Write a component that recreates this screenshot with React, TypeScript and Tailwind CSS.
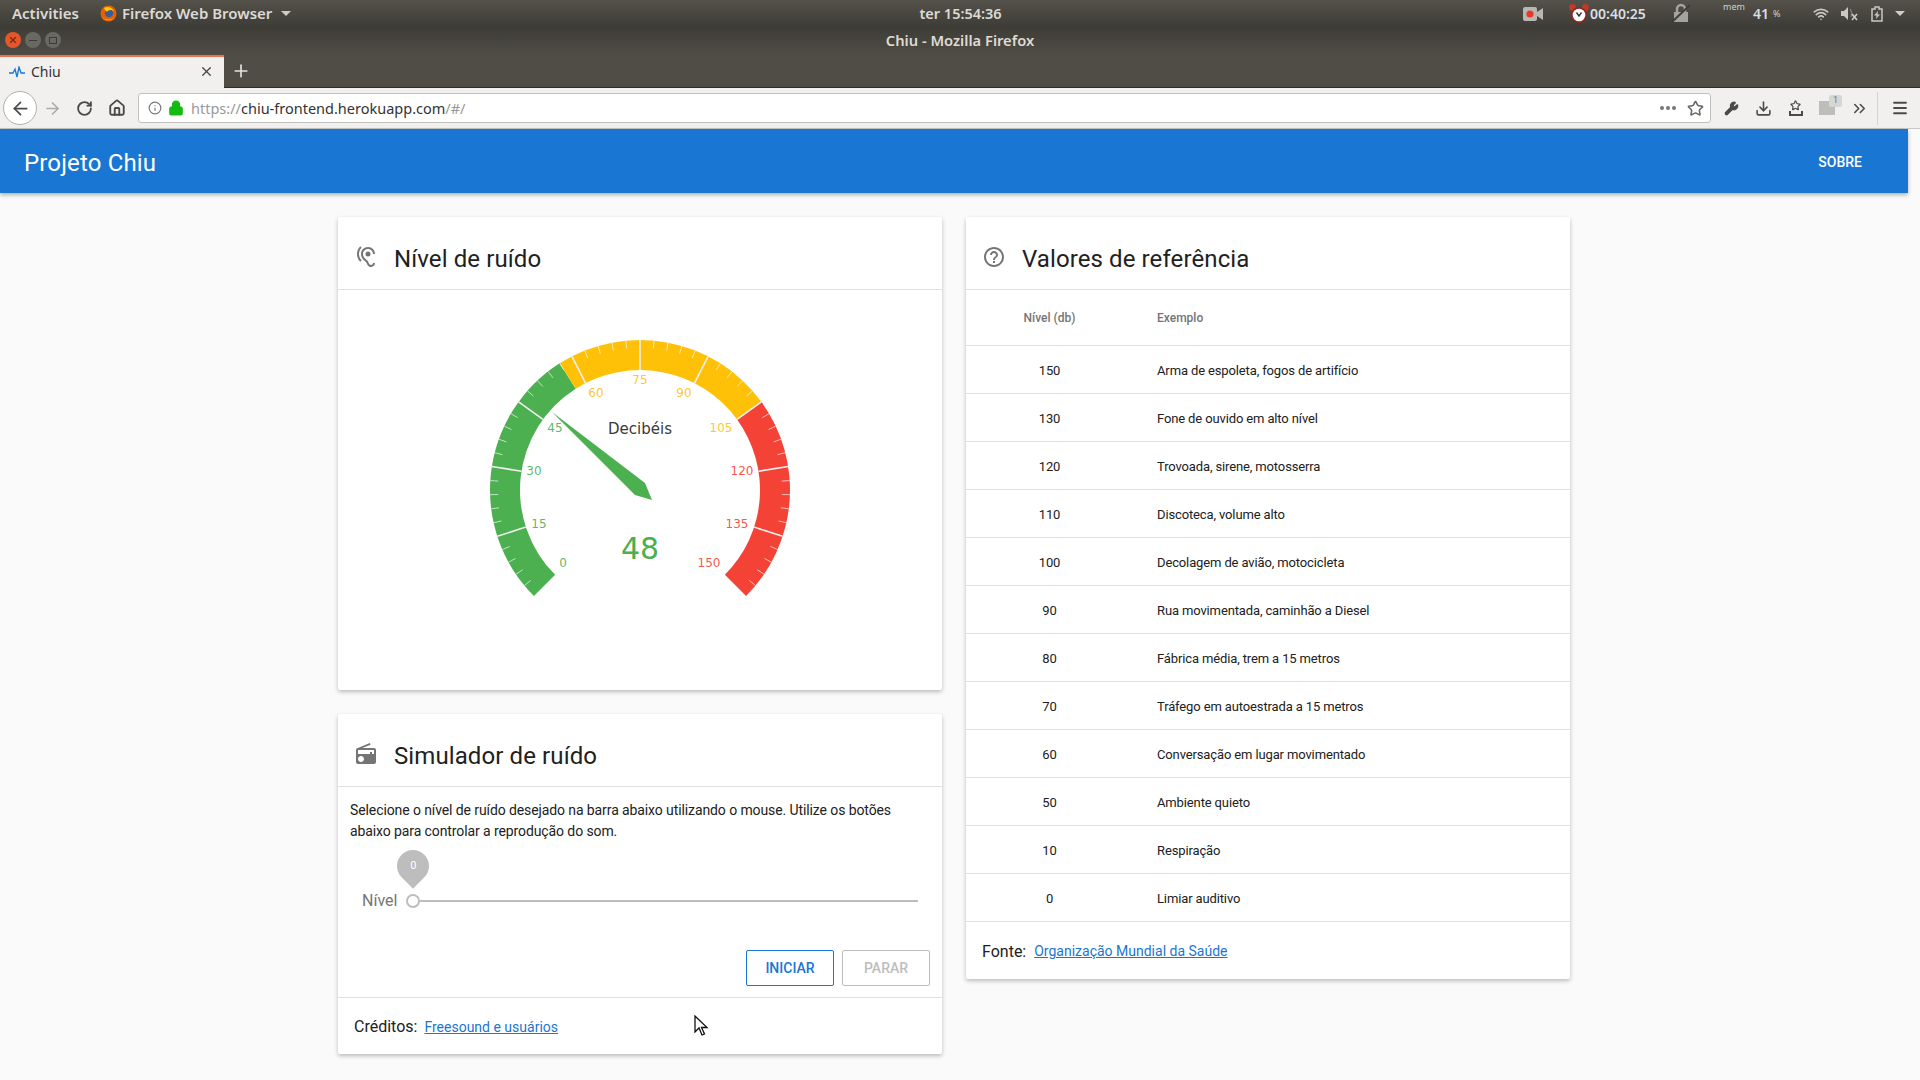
import React from "react";
import { ArrowLeft, ArrowRight, RotateCw, Home, Info, Lock, Star, Wrench, Download, ChevronsRight, Menu, Plus, X, Wifi } from "lucide-react";
import { MdHearing, MdRadio, MdHelpOutline } from "react-icons/md";

const rows: [string, string][] = [
  ["150", "Arma de espoleta, fogos de artifício"],
  ["130", "Fone de ouvido em alto nível"],
  ["120", "Trovoada, sirene, motosserra"],
  ["110", "Discoteca, volume alto"],
  ["100", "Decolagem de avião, motocicleta"],
  ["90", "Rua movimentada, caminhão a Diesel"],
  ["80", "Fábrica média, trem a 15 metros"],
  ["70", "Tráfego em autoestrada a 15 metros"],
  ["60", "Conversação em lugar movimentado"],
  ["50", "Ambiente quieto"],
  ["10", "Respiração"],
  ["0", "Limiar auditivo"],
];

const GREEN = "#4caf50";
const YELLOW = "#ffc107";
const RED = "#f44336";
const CX = 180;
const CY = 170;

const labels: [number, number, number, string][] = [
  [0, -77, 73, GREEN],
  [15, -101, 34, GREEN],
  [30, -106, -19, GREEN],
  [45, -85, -62, GREEN],
  [60, -44, -97, YELLOW],
  [75, 0, -110, YELLOW],
  [90, 44, -97, YELLOW],
  [105, 81, -62, YELLOW],
  [120, 102, -19, RED],
  [135, 97, 34, RED],
  [150, 69, 73, RED],
];

function polar(r: number, value: number) {
  const a = ((-135 + value * 1.8) * Math.PI) / 180;
  return [CX + r * Math.sin(a), CY - r * Math.cos(a)];
}

function arc(from: number, to: number) {
  const [x1, y1] = polar(150, from);
  const [x2, y2] = polar(150, to);
  const [x3, y3] = polar(120, to);
  const [x4, y4] = polar(120, from);
  const large = (to - from) * 1.8 > 180 ? 1 : 0;
  return `M${x1} ${y1}A150 150 0 ${large} 1 ${x2} ${y2}L${x3} ${y3}A120 120 0 ${large} 0 ${x4} ${y4}Z`;
}

function Gauge() {
  const majors = [15, 30, 45, 60, 75, 90, 105, 120, 135];
  const minors: number[] = [];
  for (let v = 0; v < 150; v += 3) if (v % 15 !== 0) minors.push(v);
  return (
    <svg width="360" height="290" viewBox="0 0 360 290" className="block" style={{ fontFamily: "'DejaVu Sans', sans-serif" }}>
      <path d={arc(0, 57)} fill={GREEN} />
      <path d={arc(57, 105)} fill={YELLOW} />
      <path d={arc(105, 150)} fill={RED} />
      {minors.map((v) => {
        const [x1, y1] = polar(150, v);
        const [x2, y2] = polar(142, v);
        return <line key={v} x1={x1} y1={y1} x2={x2} y2={y2} stroke="#ffffff" strokeOpacity="0.65" strokeWidth="1" />;
      })}
      {majors.map((v) => {
        const [x1, y1] = polar(150, v);
        const [x2, y2] = polar(120, v);
        return <line key={v} x1={x1} y1={y1} x2={x2} y2={y2} stroke="#f0f0f0" strokeWidth="1.6" />;
      })}
      {labels.map(([v, dx, dy, c]) => (
        <text key={v} x={CX + dx} y={CY + dy + 4} textAnchor="middle" fontSize="12" fill={c} fillOpacity="0.9">
          {v}
        </text>
      ))}
      <text x="180" y="114" textAnchor="middle" fontSize="15" fill="#3a3a3a">Decibéis</text>
      <text x="180" y="239" textAnchor="middle" fontSize="30" fill={GREEN}>48</text>
      <polygon points="92,92 185,163 192,180 175,175" fill={GREEN} />
    </svg>
  );
}

function CardHeader({ icon, title }: { icon: React.ReactNode; title: string }) {
  return (
    <div className="flex h-[73px] items-center border-b border-[#e0e0e0] pl-4 pt-[12px]">
      <div className="-mt-[4px] w-[24px] text-[24px] text-[#757575]">{icon}</div>
      <div className="ml-[16px] text-[24px] leading-none tracking-[0.1px] text-[#212121]">{title}</div>
    </div>
  );
}

function Firefox() {
  return (
    <svg width="17" height="17" viewBox="0 0 17 17">
      <circle cx="8.5" cy="8.5" r="8" fill="#e66000" />
      <path d="M2 12A8 8 0 0 0 15 12C13 15 5 15 2 12Z" fill="#ff9500" />
      <circle cx="9" cy="8" r="4.2" fill="#3c5a9a" />
      <path d="M4 3C7 1 13 2 14 7C12 4 8 5 7 7C6 6 5 5 4 3Z" fill="#ffcb00" />
    </svg>
  );
}

function Alarm() {
  return (
    <svg width="22" height="22" viewBox="0 0 22 22">
      <circle cx="4.5" cy="4.5" r="3.4" fill="#c0392b" />
      <circle cx="17.5" cy="4.5" r="3.4" fill="#c0392b" />
      <circle cx="11" cy="12" r="8" fill="#8e2a1e" />
      <circle cx="11" cy="12" r="6.3" fill="#ffffff" />
      <path d="M8.5 9.5L11 13L13.5 9.5" fill="none" stroke="#333" strokeWidth="1.4" />
    </svg>
  );
}

function TopBar() {
  return (
    <div className="flex h-[27px] items-center bg-gradient-to-b from-[#54524a] to-[#3d3c36] font-semibold text-[#dcdad5]" style={{ fontFamily: "'Noto Sans', sans-serif" }}>
      <div className="flex flex-1 items-center text-[15px]">
        <span className="ml-[12px] w-[88px]">Activities</span>
        <Firefox />
        <span className="ml-[5px] whitespace-nowrap">Firefox Web Browser</span>
        <span className="ml-[9px] h-0 w-0 border-x-[5px] border-t-[5px] border-x-transparent border-t-[#cfcdc8]" />
      </div>
      <span className="pl-[16px] text-center text-[14.5px]">ter 15:54:36</span>
      <div className="flex flex-1 items-center justify-end pr-[15px]">
        <svg width="20" height="14" viewBox="0 0 20 14">
          <rect x="0" y="0" width="14" height="14" rx="2" fill="#b9b7b2" />
          <circle cx="7" cy="7" r="3.6" fill="#e8392c" />
          <path d="M14 5L20 1V13L14 9Z" fill="#b9b7b2" />
        </svg>
        <span className="ml-[25px]"><Alarm /></span>
        <span className="w-[56px] text-[14px] text-[#d8dfe6]">00:40:25</span>
        <svg width="20" height="21" viewBox="0 0 20 21" className="ml-[25px]">
          <path d="M3 9H17V19H3Z" fill="#a5a39d" />
          <path d="M6 9V6A4 4 0 0 1 14 6V9" fill="none" stroke="#a5a39d" strokeWidth="2.5" />
          <path d="M1 19L19 2" stroke="#3f3e38" strokeWidth="2" />
        </svg>
        <div className="relative ml-[32px] flex h-[27px] w-[90px] items-center">
          <span className="absolute left-0 top-[2px] text-[9px] font-normal leading-none text-[#c5d3df]">mem</span>
          <span className="ml-[30px] text-[14px] text-[#d8dfe6]">41</span>
          <span className="ml-[4px] text-[9px] font-normal text-[#c5d3df]">%</span>
        </div>
        <Wifi size={16} className="text-[#c9c7c2]" strokeWidth={2.5} />
        <svg width="17" height="15" viewBox="0 0 17 15" className="ml-[12px]">
          <path d="M0 5H3L7 1V14L3 10H0Z" fill="#c9c7c2" />
          <path d="M9 3C11 5 11 9 10 11" fill="none" stroke="#7c7a74" strokeWidth="1.5" />
          <path d="M11 8L16 14M16 8L11 14" stroke="#d0cec9" strokeWidth="1.5" />
        </svg>
        <svg width="12" height="16" viewBox="0 0 12 16" className="ml-[13px]">
          <path d="M1 3H4V1H8V3H11V15H1Z" fill="none" stroke="#c9c7c2" strokeWidth="1.5" />
          <path d="M7 5L3 9.5H5.5L5 13L9 8.5H6.5Z" fill="#c9c7c2" />
        </svg>
        <span className="ml-[12px] h-0 w-0 border-x-[5px] border-t-[5px] border-x-transparent border-t-[#cfcdc8]" />
      </div>
    </div>
  );
}

function TitleBar() {
  return (
    <div className="flex h-[28px] items-center bg-gradient-to-b from-[#3d3c36] to-[#4f4d45] pb-[2px]">
      <span className="ml-[5px] flex h-[16px] w-[16px] items-center justify-center rounded-full bg-[#e5562b] text-[#7a2a10]"><X size={10} strokeWidth={3} /></span>
      <span className="ml-[4px] flex h-[16px] w-[16px] items-center justify-center rounded-full bg-[#6a6862]"><span className="h-[1px] w-[8px] bg-[#3d3c36]" /></span>
      <span className="ml-[4px] flex h-[16px] w-[16px] items-center justify-center rounded-full bg-[#6a6862]"><span className="h-[7px] w-[8px] border border-[#3d3c36]" /></span>
      <span className="flex-1 pr-[61px] text-center text-[14.7px] font-semibold text-[#dfdbd2]" style={{ fontFamily: "'Noto Sans', sans-serif" }}>Chiu - Mozilla Firefox</span>
    </div>
  );
}

function TabBar() {
  return (
    <div className="flex h-[33px] border-b border-[#2f2e2a] bg-[#4f4d45]">
      <div className="relative flex h-[33px] w-[224px] items-center border-t-2 border-[#e9734a] bg-[#f1f0ee] pb-[2px] pl-[9px]">
        <svg width="16" height="12" viewBox="0 0 16 12">
          <path d="M0 7H4L6 3L8 11L10 1L12 7H16" fill="none" stroke="#1976d2" strokeWidth="1.3" />
        </svg>
        <span className="ml-[6px] flex-1 text-[14px] text-[#333]" style={{ fontFamily: "'Noto Sans', sans-serif" }}>Chiu</span>
        <X size={15} className="mr-[10px] text-[#444]" />
      </div>
      <Plus size={20} className="ml-[7px] mt-[6px] text-[#e4e2de]" strokeWidth={2} />
    </div>
  );
}

function NavBar() {
  return (
    <div className="flex h-[41px] items-center border-b border-[#c8c8c4] bg-[#f1f0ee] text-[#4a4a48]">
      <span className="ml-[3px] flex h-[34px] w-[34px] items-center justify-center rounded-full border border-[#b1b1ad] bg-white">
        <ArrowLeft size={21} strokeWidth={2} />
      </span>
      <ArrowRight size={19} className="ml-[6px] text-[#aaaaa8]" strokeWidth={2} />
      <RotateCw size={17} className="ml-[14px]" strokeWidth={2.6} />
      <Home size={18} className="ml-[15px]" strokeWidth={2.5} />
      <div className="ml-[12px] flex h-[30px] w-[1573px] items-center rounded-[3px] border border-[#c0c0bc] bg-white">
        <Info size={14} className="ml-[9px] text-[#777]" />
        <Lock size={16} className="ml-[6px] text-[#13bb13]" fill="#13bb13" strokeWidth={2.5} />
        <span className="ml-[7px] flex-1 pt-[1px] text-[14.5px] text-[#999]" style={{ fontFamily: "'Noto Sans', sans-serif" }}>
          https://<span className="text-[#333]">chiu-frontend.herokuapp.com</span>/#/
        </span>
        <span className="flex gap-[2px]">
          <i className="h-[4px] w-[4px] rounded-full bg-[#777]" />
          <i className="h-[4px] w-[4px] rounded-full bg-[#777]" />
          <i className="h-[4px] w-[4px] rounded-full bg-[#777]" />
        </span>
        <Star size={17} className="ml-[11px] mr-[6px] text-[#666]" strokeWidth={2.2} />
      </div>
      <Wrench size={15} className="ml-[13px]" fill="#4a4a48" />
      <Download size={17} className="ml-[16px]" strokeWidth={2.2} />
      <span className="relative ml-[15px] flex w-[17px] flex-col items-center">
        <Star size={11} strokeWidth={2.6} />
        <span className="h-[5px] w-[14px] border-x-2 border-b-2 border-[#4a4a48]" />
      </span>
      <span className="relative ml-[15px] h-[14px] w-[16px] bg-[#bdbdba]">
        <span className="absolute -right-[7px] -top-[6px] flex h-[12px] w-[13px] items-center justify-center rounded-[2px] bg-[#d6d6d3] text-[9px] text-[#777]">1</span>
      </span>
      <ChevronsRight size={19} className="ml-[15px] mr-[8px]" strokeWidth={2} />
      <span className="h-[33px] w-px bg-[#d4d4d0]" />
      <Menu size={18} className="ml-[13px]" strokeWidth={2.4} />
    </div>
  );
}

export default function App() {
  return (
    <div className="flex h-[1080px] w-[1920px] flex-col overflow-hidden bg-white" style={{ fontFamily: "Roboto, sans-serif" }}>
      <TopBar />
      <TitleBar />
      <TabBar />
      <NavBar />
      <div className="flex min-h-0 flex-1 bg-[#fafafa]">
        <div className="w-[1908px] min-w-0">
          <header className="flex h-[64px] items-center justify-between bg-[#1976d2] pl-[24px] pr-[46px] text-white shadow-[0_2px_4px_rgba(0,0,0,0.3)]">
            <span className="pt-[4px] text-[24px] tracking-[0.15px]">Projeto Chiu</span>
            <span className="pt-[3px] text-[14px] font-medium">SOBRE</span>
          </header>
          <main className="flex items-start justify-center gap-[24px] pt-[24px]">
            <div className="flex w-[604px] flex-col gap-[24px]">
              <section className="h-[473px] rounded-[2px] bg-white shadow-[0_2px_4px_rgba(0,0,0,0.25)]">
                <CardHeader icon={<MdHearing />} title="Nível de ruído" />
                <div className="flex justify-center pt-[30px]">
                  <Gauge />
                </div>
              </section>
              <section className="h-[340px] rounded-[2px] bg-white shadow-[0_2px_4px_rgba(0,0,0,0.25)]">
                <CardHeader icon={<MdRadio />} title="Simulador de ruído" />
                <p className="px-[12px] pt-[13px] text-[14px] leading-[21px] tracking-[-0.1px] text-[#212121]">
                  Selecione o nível de ruído desejado na barra abaixo utilizando o mouse. Utilize os botões abaixo para controlar a reprodução do som.
                </p>
                <div className="relative mt-[7px] flex h-[64px] items-end pl-[24px] pr-[24px]">
                  <span className="text-[16px] leading-[24px] text-[#757575]">Nível</span>
                  <div className="relative mb-[11px] ml-[10px] h-[2px] flex-1 bg-[#bdbdbd]">
                    <span className="absolute -left-[1px] -top-[6px] h-[14px] w-[14px] rounded-full border-2 border-[#bdbdbd] bg-white" />
                    <span className="absolute -left-[10px] -top-[50px] flex h-[32px] w-[32px] rotate-[-45deg] items-center justify-center rounded-[50%_50%_50%_0] bg-[#bdbdbd]">
                      <span className="rotate-45 text-[11px] text-white">0</span>
                    </span>
                  </div>
                </div>
                <div className="flex justify-end gap-[8px] pr-[12px] pt-[37px]">
                  <button className="h-[36px] w-[88px] rounded-[2px] border border-[#1976d2] text-[14px] font-medium text-[#1976d2]">INICIAR</button>
                  <button className="h-[36px] w-[88px] rounded-[2px] border border-[#bdbdbd] text-[14px] font-medium text-[#bdbdbd]">PARAR</button>
                </div>
                <div className="relative mt-[11px] flex h-[57px] items-center border-t border-[#e0e0e0] pl-[16px] pt-[2px]">
                  <span className="text-[16px] text-[#212121]">Créditos:</span>
                  <a className="ml-[7px] text-[14px] text-[#1976d2] underline">Freesound e usuários</a>
                  <svg width="16" height="22" viewBox="0 0 16 22" className="absolute left-[356px] top-[17px]">
                    <path d="M1 1V17L5 13L8 20L10.5 19L7.5 12.5H13Z" fill="#fff" stroke="#111" strokeWidth="1.3" />
                  </svg>
                </div>
              </section>
            </div>
            <section className="w-[604px] rounded-[2px] bg-white shadow-[0_2px_4px_rgba(0,0,0,0.25)]">
              <CardHeader icon={<MdHelpOutline />} title="Valores de referência" />
              <div className="grid h-[56px] grid-cols-[167px_1fr] items-center border-b border-[#e0e0e0] text-[12px] font-medium text-[#757575]">
                <span className="text-center">Nível (db)</span>
                <span className="pl-[24px]">Exemplo</span>
              </div>
              {rows.map(([n, t]) => (
                <div key={n} className="grid h-[48px] grid-cols-[167px_1fr] items-center border-b border-[#e0e0e0] pt-[2px] text-[13px] tracking-[-0.13px] text-[#212121]">
                  <span className="text-center">{n}</span>
                  <span className="pl-[24px]">{t}</span>
                </div>
              ))}
              <div className="flex h-[57px] items-center pl-[16px] pt-[2px]">
                <span className="text-[16px] text-[#212121]">Fonte:</span>
                <a className="ml-[8px] text-[14px] text-[#1976d2] underline">Organização Mundial da Saúde</a>
              </div>
            </section>
          </main>
        </div>
      </div>
    </div>
  );
}
